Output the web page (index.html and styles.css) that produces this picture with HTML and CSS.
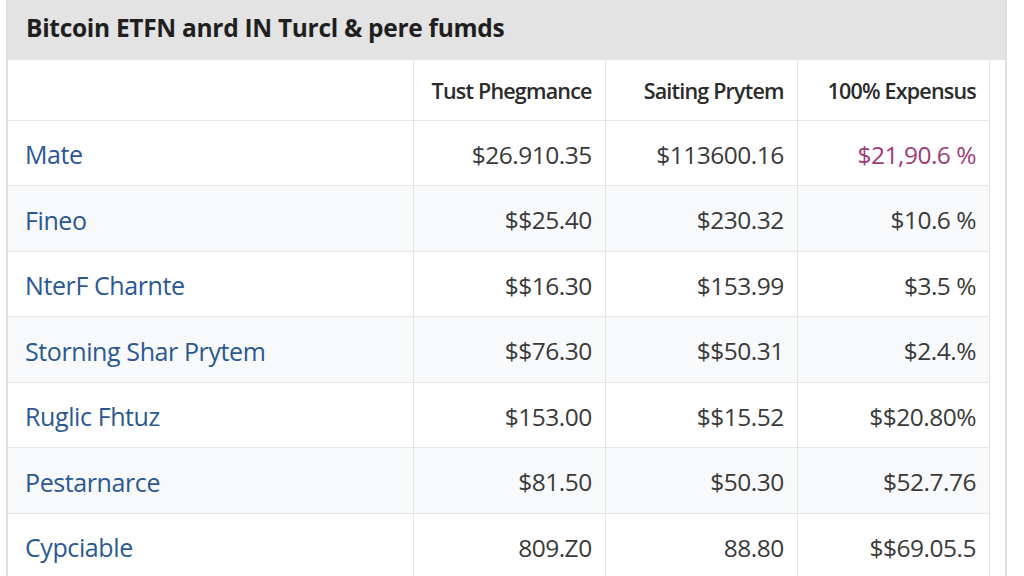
FILE: index.html
```html
<!DOCTYPE html>
<html>
<head>
<meta charset="utf-8">
<link rel="stylesheet" href="styles.css">
</head>
<body>
<div class="card">
  <div class="title-bar">
    <h1 class="title">Bitcoin ETFN anrd IN Turcl &amp; pere fumds</h1>
  </div>
  <div class="table-wrap">
    <table class="funds">
      <thead>
        <tr>
          <th class="name-col"></th>
          <th>Tust Phegmance</th>
          <th>Saiting Prytem</th>
          <th>100% Expensus</th>
        </tr>
      </thead>
      <tbody>
        <tr><td class="name">Mate</td><td>$26.910.35</td><td>$113600.16</td><td class="accent">$21,90.6 %</td></tr>
        <tr class="alt"><td class="name">Fineo</td><td>$$25.40</td><td>$230.32</td><td>$10.6 %</td></tr>
        <tr><td class="name">NterF Charnte</td><td>$$16.30</td><td>$153.99</td><td>$3.5 %</td></tr>
        <tr class="alt"><td class="name">Storning Shar Prytem</td><td>$$76.30</td><td>$$50.31</td><td>$2.4.%</td></tr>
        <tr><td class="name">Ruglic Fhtuz</td><td>$153.00</td><td>$$15.52</td><td>$$20.80%</td></tr>
        <tr class="alt"><td class="name">Pestarnarce</td><td>$81.50</td><td>$50.30</td><td>$52.7.76</td></tr>
        <tr><td class="name">Cypciable</td><td>809.Z0</td><td>88.80</td><td>$$69.05.5</td></tr>
      </tbody>
    </table>
  </div>
</div>
</body>
</html>
```
FILE: styles.css
```css
html, body {
  margin: 0;
  padding: 0;
  background: #ffffff;
  height: 576px;
  overflow: hidden;
}
body {
  font-family: "Open Sans", "Liberation Sans", sans-serif;
}
.card {
  margin-left: 6px;
  width: 997px;
  border-left: 2px solid #dedede;
  border-right: 2px solid #dedede;
  background: #fff;
}
.title-bar {
  background: #e3e3e3;
  height: 60px;
  display: flex;
  align-items: center;
  padding-left: 18px;
  padding-bottom: 5px;
  box-sizing: border-box;
}
.title {
  margin: 0;
  font-size: 24.5px;
  font-weight: 700;
  color: #1f1f1f;
  letter-spacing: -0.3px;
}
.table-wrap {
  padding-right: 13px;
}
.funds {
  width: 982px;
  border-collapse: collapse;
  table-layout: fixed;
  border-right: 1px solid #e4e4e4;
}
.funds th, .funds td {
  border-bottom: 1px solid #e6e6e6;
  border-left: 1px solid #e6e6e6;
  text-align: right;
  padding: 0 13px 0 10px;
  white-space: nowrap;
  line-height: 1.2;
}
.funds th:first-child, .funds td:first-child {
  border-left: none;
}
.funds th {
  height: 60px;
  padding-top: 3px;
  box-sizing: border-box;
  font-size: 21.5px;
  font-weight: 600;
  color: #2b2b2b;
  letter-spacing: -0.8px;
}
.funds th.name-col {
  width: 405px;
}
.funds td {
  height: 61.5px;
  padding-top: 3px;
  padding-bottom: 0;
  font-size: 24.5px;
  font-weight: 500;
  color: #3a3a3a;
  letter-spacing: -0.5px;
}
.funds td.name {
  text-align: left;
  color: #2a5895;
  padding-left: 17px;
  font-size: 25px;
  letter-spacing: -0.4px;
}
.funds td.accent {
  color: #a03a78;
}
.funds tr.alt td {
  background: #f8f9fa;
}
```
